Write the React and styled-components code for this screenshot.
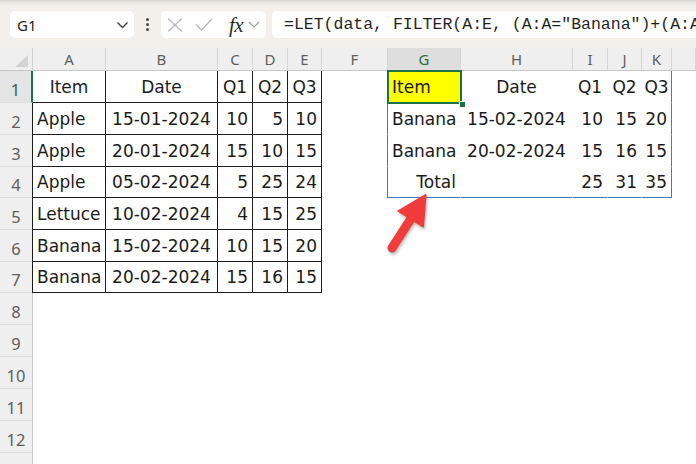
import React from 'react';
import styled, { createGlobalStyle, css } from 'styled-components';

const GlobalStyle = createGlobalStyle`
  html, body { margin: 0; padding: 0; background: #fff; }
  body { width: 696px; height: 464px; overflow: hidden; }
`;

const Page = styled.div`
  position: relative;
  width: 696px;
  height: 464px;
  overflow: hidden;
  display: flex;
  flex-direction: column;
  background: #fff;
`;

const Toolbar = styled.div`
  height: 48px;
  flex: none;
  box-sizing: border-box;
  display: flex;
  align-items: center;
  padding: 1px 0 0 10px;
  background: linear-gradient(to bottom, #d8d4cf 0px, #ebe8e4 3px, #f3f0ec 6px);
`;

const NameBox = styled.div`
  width: 124px;
  height: 27px;
  box-sizing: border-box;
  display: flex;
  align-items: center;
  justify-content: space-between;
  padding: 0 5px 0 7px;
  background: #fff;
  border-radius: 5px;
  font-family: "Noto Sans", sans-serif;
  font-size: 15px;
  color: #1f1f1f;
`;

const Kebab = styled.div`
  display: flex;
  flex-direction: column;
  gap: 2px;
  margin: 0 12px;
`;

const Dot = styled.span`
  width: 3px;
  height: 3px;
  border-radius: 50%;
  background: #4a4a4a;
`;

const FuncBox = styled.div`
  width: 105px;
  height: 27px;
  box-sizing: border-box;
  display: flex;
  align-items: center;
  padding-left: 6px;
  background: #fff;
  border-radius: 5px;
`;

const IconSlot = styled.span`
  display: flex;
  align-items: center;
  margin-right: ${p => p.$gap || 0}px;
`;

const Fx = styled.span`
  font-family: "Liberation Serif", serif;
  font-style: italic;
  font-size: 21px;
  line-height: 20px;
  color: #2b2b2b;
  margin-right: 5px;
  letter-spacing: -0.5px;
`;

const FormulaBox = styled.div`
  flex: 1;
  min-width: 0;
  height: 27px;
  box-sizing: border-box;
  margin-left: 6px;
  padding-left: 12px;
  display: flex;
  align-items: center;
  background: #fff;
  border-radius: 5px 0 0 5px;
  font-family: "Liberation Mono", monospace;
  font-size: 16.5px;
  color: #1f1f1f;
  white-space: nowrap;
  overflow: hidden;
`;

const Sheet = styled.div`
  flex: 1;
  display: grid;
  grid-template-columns: 33px 73px 112px 35px 35px 34px 66px 73px 112px 35px 34px 30px 1fr;
  grid-template-rows: 23px 32px 32px 32px 31px 32px 32px 31px 32px 32px 32px 32px 32px 32px;
  background: #fff;
  overflow: hidden;
`;

const Corner = styled.div`
  position: relative;
  box-sizing: border-box;
  background: #efefef;
  border-right: 1px solid #d3d3d3;
  border-bottom: 1px solid #c6c6c6;
  &::after {
    content: "";
    position: absolute;
    right: 4px;
    bottom: 3px;
    width: 0;
    height: 0;
    border-left: 13px solid transparent;
    border-bottom: 12px solid #d4d4d4;
  }
`;

const ColHeader = styled.div`
  box-sizing: border-box;
  display: flex;
  align-items: center;
  justify-content: center;
  background: ${p => (p.$selected ? '#dedede' : '#efefef')};
  color: ${p => (p.$selected ? '#2f6a46' : '#5e5e5e')};
  border-right: 1px solid #d6d6d6;
  border-bottom: 1px solid #c6c6c6;
  font-family: "Noto Sans", sans-serif;
  font-size: 15px;
`;

const RowHeader = styled.div`
  box-sizing: border-box;
  display: flex;
  align-items: flex-end;
  justify-content: center;
  padding-bottom: 3px;
  background: ${p => (p.$selected ? '#e4e4e4' : '#efefef')};
  color: ${p => (p.$selected ? '#2f6a46' : '#5e5e5e')};
  border-bottom: 1px solid #dcdcdc;
  border-right: ${p => (p.$selected ? '2px solid #1e7145' : '1px solid #c6c6c6')};
  font-family: "Noto Sans", sans-serif;
  font-size: 16.5px;
  line-height: 18px;
`;

const Cell = styled.div`
  position: relative;
  box-sizing: border-box;
  min-width: 0;
  display: flex;
  align-items: flex-end;
  justify-content: ${p =>
    p.$align === 'right' ? 'flex-end' : p.$align === 'center' ? 'center' : 'flex-start'};
  padding: 0 4px 5px 4px;
  font-family: "DejaVu Sans", sans-serif;
  font-size: 17px;
  line-height: 20px;
  color: #1b1b1b;
  white-space: nowrap;
  background: ${p => p.$fill || 'transparent'};
  border-right: 1px solid ${p => p.$edgeRight || 'transparent'};
  border-bottom: 1px solid ${p => p.$edgeBottom || 'transparent'};
  ${p =>
    p.$edgeLeft &&
    css`
      margin-left: -1px;
      border-left: 1px solid ${p.$edgeLeft};
    `}
  ${p =>
    p.$active &&
    css`
      &::after {
        content: "";
        position: absolute;
        left: -1px;
        top: -1px;
        right: -2px;
        bottom: -2px;
        border: 2px solid #1e7145;
        z-index: 1;
      }
      &::before {
        content: "";
        position: absolute;
        right: -5px;
        bottom: -5px;
        width: 5px;
        height: 5px;
        background: #1e7145;
        box-shadow: 0 0 0 1px #fff;
        z-index: 2;
      }
    `}
`;

const ArrowSvg = styled.svg`
  position: absolute;
  left: 380px;
  top: 185px;
  width: 56px;
  height: 75px;
  overflow: visible;
  filter: drop-shadow(1px 2px 1.5px rgba(0, 0, 0, 0.3));
`;

const COLS = ['A', 'B', 'C', 'D', 'E', 'F', 'G', 'H', 'I', 'J', 'K', 'L'];
const ROW_COUNT = 13;
const VISIBLE_ROW_LABELS = 12;
const BLACK = '#1d1d1d';
const BLUE = '#4a76c8';

const TABLE = [
  ['Item', 'Date', 'Q1', 'Q2', 'Q3'],
  ['Apple', '15-01-2024', 10, 5, 10],
  ['Apple', '20-01-2024', 15, 10, 15],
  ['Apple', '05-02-2024', 5, 25, 24],
  ['Lettuce', '10-02-2024', 4, 15, 25],
  ['Banana', '15-02-2024', 10, 15, 20],
  ['Banana', '20-02-2024', 15, 16, 15],
];

const SPILL = [
  ['Item', 'Date', 'Q1', 'Q2', 'Q3'],
  ['Banana', '15-02-2024', 10, 15, 20],
  ['Banana', '20-02-2024', 15, 16, 15],
  ['Total', '', 25, 31, 35],
];

function alignFor(r, k, value) {
  if (r === 0) return k === 0 ? 'left' : 'center';
  if (k === 0) return value === 'Total' ? 'right' : 'left';
  if (k === 1) return 'center';
  return 'right';
}

function cellProps(r, c) {
  if (c <= 4 && r < TABLE.length) {
    const value = TABLE[r][c];
    return {
      value,
      $align: r === 0 ? 'center' : alignFor(r, c, value),
      $edgeRight: BLACK,
      $edgeBottom: BLACK,
      $edgeLeft: c === 0 && r > 0 ? BLACK : undefined,
    };
  }
  if (c >= 6 && c <= 10 && r < SPILL.length) {
    const k = c - 6;
    const value = SPILL[r][k];
    const active = r === 0 && k === 0;
    return {
      value,
      $align: alignFor(r, k, value),
      $edgeLeft: k === 0 ? BLUE : undefined,
      $edgeRight: k === 4 ? BLUE : undefined,
      $edgeBottom: r === SPILL.length - 1 ? BLUE : undefined,
      $fill: active ? '#ffff00' : undefined,
      $active: active,
    };
  }
  return { value: '' };
}

export default function App() {
  const rows = [];
  for (let r = 0; r < ROW_COUNT; r++) {
    rows.push(
      <RowHeader key={`rh${r}`} $selected={r === 0}>
        {r < VISIBLE_ROW_LABELS ? r + 1 : ''}
      </RowHeader>
    );
    COLS.forEach((col, c) => {
      const { value, ...rest } = cellProps(r, c);
      rows.push(
        <Cell key={`${col}${r}`} {...rest}>
          {value}
        </Cell>
      );
    });
  }

  return (
    <Page>
      <GlobalStyle />
      <Toolbar>
        <NameBox>
          <span>G1</span>
          <svg width="13" height="8" viewBox="0 0 13 8">
            <polyline points="1.5,1.5 6.5,6.5 11.5,1.5" fill="none" stroke="#3d3d3d" strokeWidth="1.4" />
          </svg>
        </NameBox>
        <Kebab>
          <Dot />
          <Dot />
          <Dot />
        </Kebab>
        <FuncBox>
          <IconSlot $gap={12}>
            <svg width="16" height="14" viewBox="0 0 16 14">
              <line x1="1" y1="0.5" x2="15" y2="13.5" stroke="#b9b9b9" strokeWidth="1.3" />
              <line x1="15" y1="0.5" x2="1" y2="13.5" stroke="#b9b9b9" strokeWidth="1.3" />
            </svg>
          </IconSlot>
          <IconSlot $gap={16}>
            <svg width="18" height="13" viewBox="0 0 18 13">
              <polyline points="1,6.5 6.5,12 17,1" fill="none" stroke="#b9b9b9" strokeWidth="1.3" />
            </svg>
          </IconSlot>
          <Fx>fx</Fx>
          <IconSlot>
            <svg width="12" height="7" viewBox="0 0 12 7">
              <polyline points="1,1 6,6 11,1" fill="none" stroke="#9a9a9a" strokeWidth="1.2" />
            </svg>
          </IconSlot>
        </FuncBox>
        <FormulaBox>
          =LET(data, FILTER(A:E, (A:A="Banana")+(A:A="Item")), VSTACK(data, HSTACK("Total", "", BYCOL(DROP(data,1,2), LAMBDA(c, SUM(c))))))
        </FormulaBox>
      </Toolbar>
      <Sheet>
        <Corner />
        {COLS.map(col => (
          <ColHeader key={col} $selected={col === 'G'}>
            {col === 'L' ? '' : col}
          </ColHeader>
        ))}
        {rows}
      </Sheet>
      <ArrowSvg viewBox="0 0 56 75">
        <line x1="12" y1="63" x2="32" y2="32" stroke="#f23c3c" strokeWidth="9" strokeLinecap="round" />
        <polygon points="45.5,10 43,41.5 18.5,26" fill="#f23c3c" stroke="#f23c3c" strokeWidth="2" strokeLinejoin="round" />
      </ArrowSvg>
    </Page>
  );
}
